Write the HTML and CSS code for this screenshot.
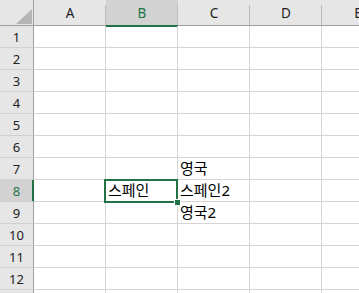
FILE: index.html
```html
<!DOCTYPE html>
<html lang="ko">
<head>
    <meta charset="UTF-8">
    <title>Sheet1</title>
    <link rel="stylesheet" href="styles.css">
</head>
<body>
    <div class="sheet">
        <div class="corner">
            <svg width="16" height="15" viewBox="0 0 16 15"><polygon points="0,15 16,15 16,0" fill="#b5b5b5"/></svg>
        </div>
        <div class="col-h">A</div>
        <div class="col-h selected">B</div>
        <div class="col-h">C</div>
        <div class="col-h">D</div>
        <div class="col-h">E</div>

        <div class="row-h">1</div><div class="cell"></div><div class="cell"></div><div class="cell"></div><div class="cell"></div><div class="cell"></div>
        <div class="row-h">2</div><div class="cell"></div><div class="cell"></div><div class="cell"></div><div class="cell"></div><div class="cell"></div>
        <div class="row-h">3</div><div class="cell"></div><div class="cell"></div><div class="cell"></div><div class="cell"></div><div class="cell"></div>
        <div class="row-h">4</div><div class="cell"></div><div class="cell"></div><div class="cell"></div><div class="cell"></div><div class="cell"></div>
        <div class="row-h">5</div><div class="cell"></div><div class="cell"></div><div class="cell"></div><div class="cell"></div><div class="cell"></div>
        <div class="row-h">6</div><div class="cell"></div><div class="cell"></div><div class="cell"></div><div class="cell"></div><div class="cell"></div>
        <div class="row-h">7</div><div class="cell"></div><div class="cell"></div><div class="cell">영국</div><div class="cell"></div><div class="cell"></div>
        <div class="row-h selected">8</div><div class="cell"></div><div class="cell active">스페인<div class="sel-box"><span class="handle"></span></div></div><div class="cell">스페인2</div><div class="cell"></div><div class="cell"></div>
        <div class="row-h">9</div><div class="cell"></div><div class="cell"></div><div class="cell">영국2</div><div class="cell"></div><div class="cell"></div>
        <div class="row-h">10</div><div class="cell"></div><div class="cell"></div><div class="cell"></div><div class="cell"></div><div class="cell"></div>
        <div class="row-h">11</div><div class="cell"></div><div class="cell"></div><div class="cell"></div><div class="cell"></div><div class="cell"></div>
        <div class="row-h">12</div><div class="cell"></div><div class="cell"></div><div class="cell"></div><div class="cell"></div><div class="cell"></div>
        <div class="row-h"></div><div class="cell"></div><div class="cell"></div><div class="cell"></div><div class="cell"></div><div class="cell"></div>
    </div>
</body>
</html>
```

FILE: styles.css
```css
body {
    margin: 0;
    overflow: hidden;
    background: #fff;
    font-family: "Noto Sans", "Noto Sans CJK KR", sans-serif;
    color: #000;
}
.sheet {
    display: grid;
    grid-template-columns: 34px repeat(5, 72px);
    grid-template-rows: 26px repeat(13, 22px);
    width: 394px;
}
.corner {
    display: flex;
    justify-content: flex-end;
    align-items: flex-end;
    padding: 0 1px 1px 0;
    background: #e6e6e6;
    border-right: 1px solid #9f9f9f;
    border-bottom: 1px solid #9f9f9f;
}
.corner svg {
    display: block;
}
.col-h {
    background-color: #e6e6e6;
    background-image: linear-gradient(#bdbdbd, #bdbdbd);
    background-size: 1px 20px;
    background-position: right bottom;
    background-repeat: no-repeat;
    border-bottom: 1px solid #9f9f9f;
    text-align: center;
    font-size: 13.5px;
    line-height: 25px;
    padding-top: 1px;
    color: #222;
}
.col-h.selected {
    background-color: #d2d2d2;
    border-bottom-color: #217346;
    box-shadow: 0 1px 0 #217346;
    color: #217346;
}
.row-h {
    background: #e6e6e6;
    border-right: 1px solid #9f9f9f;
    border-bottom: 1px solid #cfcfcf;
    text-align: center;
    font-size: 13px;
    line-height: 21px;
    padding-top: 1px;
    color: #222;
}
.row-h.selected {
    background: #d2d2d2;
    border-right-color: #217346;
    box-shadow: inset -1px 0 0 #217346;
    color: #217346;
}
.cell {
    position: relative;
    border-right: 1px solid #d4d4d4;
    border-bottom: 1px solid #d4d4d4;
    padding: 0 2px;
    font-size: 15px;
    line-height: 21px;
    white-space: nowrap;
}
.sel-box {
    position: absolute;
    z-index: 1;
    left: -2px;
    top: -1px;
    width: 74px;
    height: 24px;
    box-sizing: border-box;
    border: 2px solid #217346;
}
.handle {
    position: absolute;
    right: -5px;
    bottom: -5px;
    width: 7px;
    height: 7px;
    box-sizing: border-box;
    background: #217346;
    border: 1px solid #fff;
}
```
